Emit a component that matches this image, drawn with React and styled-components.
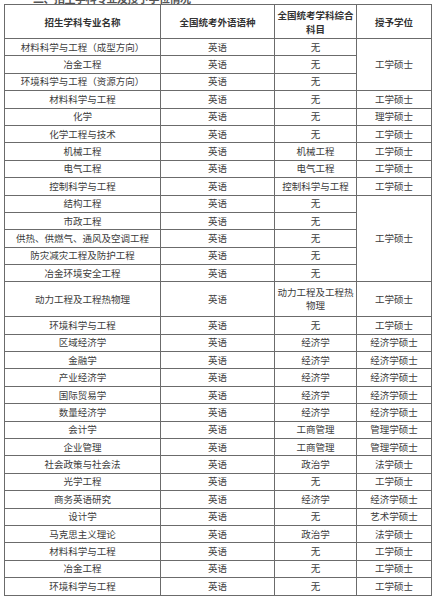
import React from "react";
import styled, { createGlobalStyle } from "styled-components";

const Global = createGlobalStyle`
  html, body { margin: 0; padding: 0; background: #fff; }
  body {
    font-family: "Noto Sans CJK SC", "Noto Sans", sans-serif;
    color: #3a3a3a;
  }
`;

const Page = styled.div`
  width: 437px;
  height: 600px;
  overflow: hidden;
  position: relative;
  background: #fff;
`;

const Caption = styled.div`
  height: 4px;
  overflow: hidden;
  display: flex;
  align-items: flex-end;
  padding-left: 33px;
`;

const CaptionText = styled.span`
  font-size: 11px;
  line-height: 11px;
  font-weight: 700;
  color: #555;
  letter-spacing: -0.5px;
`;

const Table = styled.table`
  margin-left: 4px;
  width: 427px;
  border-collapse: collapse;
  table-layout: fixed;
`;

const Col = styled.col`
  width: ${(p) => p.$w}px;
`;

const Row = styled.tr`
  height: ${(p) => p.$h || 17.4}px;
`;

const Th = styled.th`
  border: 1px solid #6b6b6b;
  font-size: 9.5px;
  font-weight: 700;
  line-height: 14px;
  color: #333;
  text-align: center;
  vertical-align: middle;
  padding: 0 2px;
`;

const Td = styled.td`
  border: 1px solid #6b6b6b;
  font-size: 9.5px;
  line-height: 13px;
  color: #3c3c3c;
  text-align: center;
  vertical-align: middle;
  padding: 0 2px;
  white-space: ${(p) => (p.$wrap ? "normal" : "nowrap")};
  overflow: hidden;
`;

const rows = [
  ["材料科学与工程（成型方向）", "英语", "无", { text: "工学硕士", span: 3 }],
  ["冶金工程", "英语", "无", null],
  ["环境科学与工程（资源方向）", "英语", "无", null],
  ["材料科学与工程", "英语", "无", { text: "工学硕士" }],
  ["化学", "英语", "无", { text: "理学硕士" }],
  ["化学工程与技术", "英语", "无", { text: "工学硕士" }],
  ["机械工程", "英语", "机械工程", { text: "工学硕士" }],
  ["电气工程", "英语", "电气工程", { text: "工学硕士" }],
  ["控制科学与工程", "英语", "控制科学与工程", { text: "工学硕士" }],
  ["结构工程", "英语", "无", { text: "工学硕士", span: 5 }],
  ["市政工程", "英语", "无", null],
  ["供热、供燃气、通风及空调工程", "英语", "无", null],
  ["防灾减灾工程及防护工程", "英语", "无", null],
  ["冶金环境安全工程", "英语", "无", null],
  ["动力工程及工程热物理", "英语", "动力工程及工程热物理", { text: "工学硕士" }, 34.8],
  ["环境科学与工程", "英语", "无", { text: "工学硕士" }],
  ["区域经济学", "英语", "经济学", { text: "经济学硕士" }],
  ["金融学", "英语", "经济学", { text: "经济学硕士" }],
  ["产业经济学", "英语", "经济学", { text: "经济学硕士" }],
  ["国际贸易学", "英语", "经济学", { text: "经济学硕士" }],
  ["数量经济学", "英语", "经济学", { text: "经济学硕士" }],
  ["会计学", "英语", "工商管理", { text: "管理学硕士" }],
  ["企业管理", "英语", "工商管理", { text: "管理学硕士" }],
  ["社会政策与社会法", "英语", "政治学", { text: "法学硕士" }],
  ["光学工程", "英语", "无", { text: "工学硕士" }],
  ["商务英语研究", "英语", "经济学", { text: "经济学硕士" }],
  ["设计学", "英语", "无", { text: "艺术学硕士" }],
  ["马克思主义理论", "英语", "政治学", { text: "法学硕士" }],
  ["材料科学与工程", "英语", "无", { text: "工学硕士" }],
  ["冶金工程", "英语", "无", { text: "工学硕士" }],
  ["环境科学与工程", "英语", "无", { text: "工学硕士" }],
];

export default function App() {
  return (
    <Page>
      <Global />
      <Caption>
        <CaptionText>二、招生学科专业及授予学位情况</CaptionText>
      </Caption>
      <Table>
        <colgroup>
          <Col $w={156} />
          <Col $w={114} />
          <Col $w={82} />
          <Col $w={75} />
        </colgroup>
        <thead>
          <Row $h={34}>
            <Th>招生学科专业名称</Th>
            <Th>全国统考外语语种</Th>
            <Th>全国统考学科综合科目</Th>
            <Th>授予学位</Th>
          </Row>
        </thead>
        <tbody>
          {rows.map(([a, b, c, d, h], i) => (
            <Row key={i} $h={h}>
              <Td>{a}</Td>
              <Td>{b}</Td>
              <Td $wrap={!!h}>{c}</Td>
              {d && <Td rowSpan={d.span || 1}>{d.text}</Td>}
            </Row>
          ))}
        </tbody>
      </Table>
    </Page>
  );
}
